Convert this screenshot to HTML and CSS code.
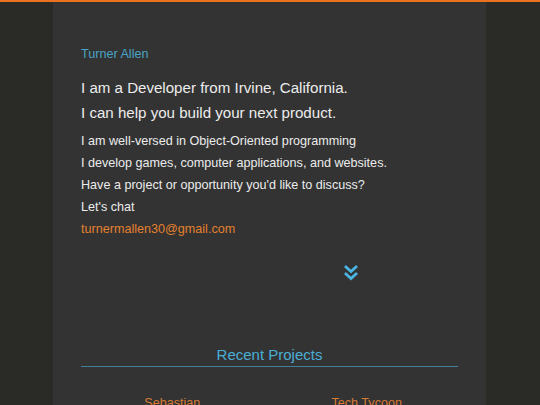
FILE: index.html
```html
<!DOCTYPE html>
<html>
<head>
<meta charset="utf-8">
<link rel="stylesheet" href="styles.css">
</head>
<body>
<div class="page">
  <main class="panel">
    <p class="name">Turner Allen</p>
    <h1 class="headline">I am a Developer from Irvine, California.<br>I can help you build your next product.</h1>
    <div class="about">
      <p>I am well-versed in Object-Oriented programming</p>
      <p>I develop games, computer applications, and websites.</p>
      <p>Have a project or opportunity you'd like to discuss?</p>
      <p>Let's chat</p>
      <p><a class="email" href="#">turnermallen30@gmail.com</a></p>
    </div>
    <div class="scroll">
      <svg width="14" height="16" viewBox="0 0 14 16" aria-hidden="true">
        <path d="M2 2 L7 6.5 L12 2" fill="none" stroke="#4ab4e2" stroke-width="2.8" stroke-linecap="square" stroke-linejoin="miter"/>
        <path d="M2 9 L7 13.5 L12 9" fill="none" stroke="#4ab4e2" stroke-width="2.8" stroke-linecap="square" stroke-linejoin="miter"/>
      </svg>
    </div>
    <h2 class="section-title">Recent Projects</h2>
    <div class="projects">
      <div class="project">Sebastian</div>
      <div class="project">Tech Tycoon</div>
    </div>
  </main>
</div>
</body>
</html>
```

FILE: styles.css
```css
html, body {
  margin: 0;
  padding: 0;
}
body {
  background: #2a2b26;
  font-family: "Liberation Sans", Arial, sans-serif;
  border-top: 2px solid #ea7320;
  height: 403px;
  overflow: hidden;
}
.page {
  display: flex;
  padding-left: 53px;
}
.panel {
  width: 377px;
  background: #333333;
  padding: 42px 28px 40px 28px;
  min-height: 400px;
}
.name {
  margin: 0;
  font-size: 12.6px;
  line-height: 20px;
  color: #4aa3c4;
}
.headline {
  margin: 11px 0 0 0;
  font-size: 15.1px;
  font-weight: normal;
  line-height: 25px;
  color: #ececec;
}
.about {
  margin-top: 5px;
}
.about p {
  margin: 0;
  font-size: 12.6px;
  line-height: 22px;
  color: #ececec;
}
.email {
  color: #e4802f;
  text-decoration: none;
}
.scroll {
  margin-top: 25px;
  padding-left: 263px;
  height: 16px;
}
.scroll svg {
  display: block;
}
.section-title {
  margin: 64px 0 0 0;
  font-size: 15px;
  font-weight: normal;
  line-height: 20px;
  color: #4aaed6;
  text-align: center;
  padding-bottom: 1px;
  border-bottom: 1px solid #447f97;
}
.projects {
  display: grid;
  grid-template-columns: 1fr 1fr;
  column-gap: 12px;
  margin-top: 26px;
}
.project {
  text-align: center;
  font-size: 12.6px;
  line-height: 20px;
  color: #d77a33;
}
```
